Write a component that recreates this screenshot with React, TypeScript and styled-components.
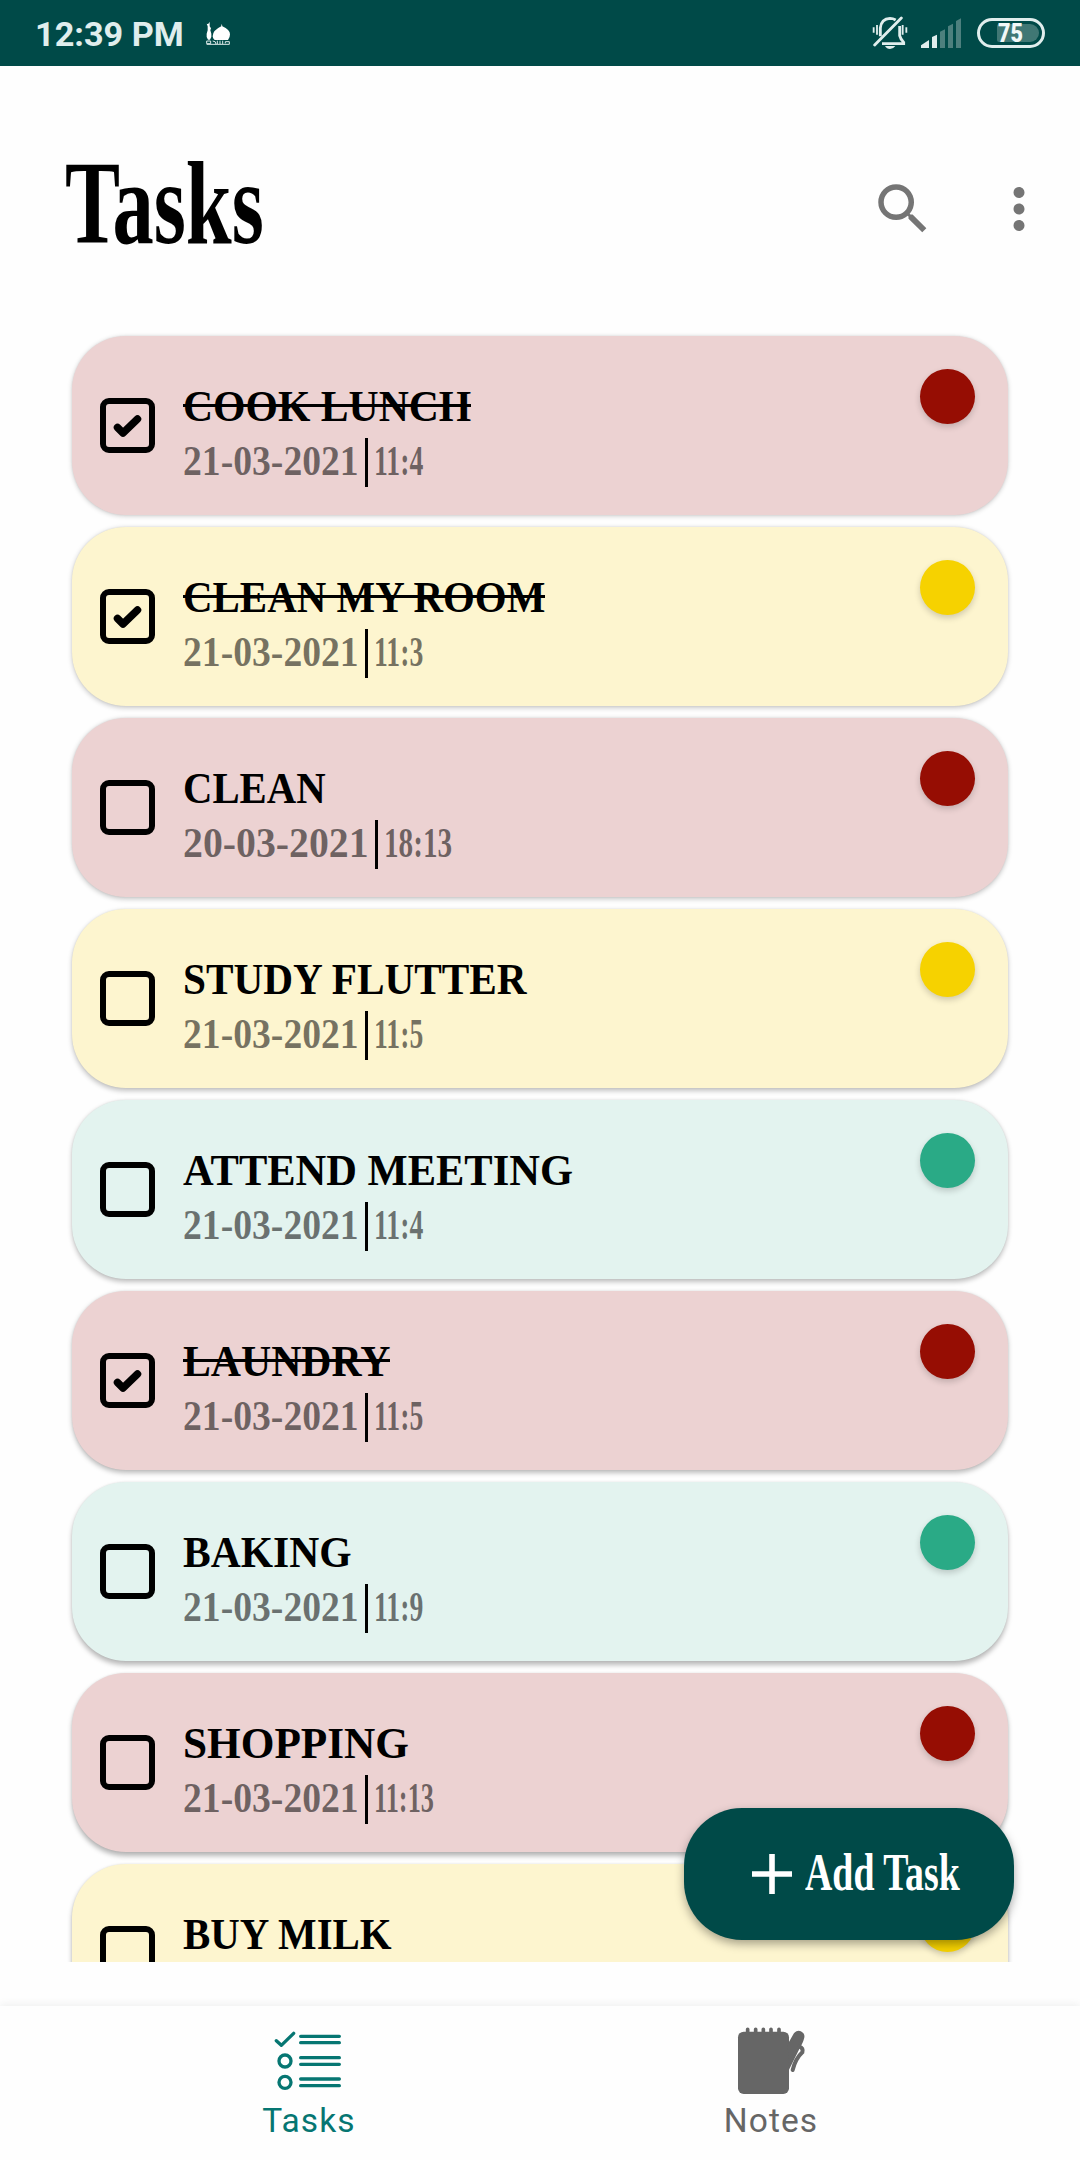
import React, { useLayoutEffect, useRef, useState } from "react";
import styled, { createGlobalStyle } from "styled-components";
import { MdMoreVert, MdSearch } from "react-icons/md";

const GlobalStyle = createGlobalStyle`
  * { box-sizing: border-box; }
  body { margin: 0; background: #fefefe; }
`;

const serif = `"Liberation Serif", serif`;
const sans = `Roboto, sans-serif`;
const brand = "#004a48";
const statusInk = "#e0eeed";

const Screen = styled.div`
  position: relative;
  display: flex;
  flex-direction: column;
  width: 1080px;
  height: 2160px;
  overflow: hidden;
  background: #fefefe;
`;

/* ---------- fitted text ---------- */

const FitBox = styled.span<{ $width: number }>`
  display: block;
  flex: none;
  width: ${(p) => p.$width}px;
  white-space: nowrap;
`;

const FitInner = styled.span`
  display: inline-block;
  transform-origin: 0 50%;
  vertical-align: top;
`;

function Fit({ width, children }: { width: number; children: string }) {
  const ref = useRef<HTMLSpanElement>(null);
  const [scale, setScale] = useState(1);
  useLayoutEffect(() => {
    if (ref.current) setScale(width / ref.current.offsetWidth);
  }, [width, children]);
  return (
    <FitBox $width={width}>
      <FitInner ref={ref} style={{ transform: `scaleX(${scale})` }}>
        {children}
      </FitInner>
    </FitBox>
  );
}

/* ---------- status bar ---------- */

const StatusBar = styled.header`
  flex: none;
  display: flex;
  align-items: center;
  height: 66px;
  padding: 0 35px 0 35px;
  background: ${brand};
  color: ${statusInk};
`;

const Clock = styled.div`
  margin-right: 21px;
  font: 700 34px/40px ${sans};
  padding-top: 2px;
`;

const StatusIcons = styled.div`
  display: flex;
  align-items: center;
  margin-left: auto;
`;

const Battery = styled.div`
  display: flex;
  align-items: center;
  width: 68px;
  height: 30px;
  margin-left: 15px;
  padding-left: 17px;
  border: 3px solid ${statusInk};
  border-radius: 15px;
`;

const BatteryLevel = styled.div`
  width: 42px;
  height: 18px;
  padding-left: 1px;
  border-radius: 2px 9px 9px 2px;
  background: #407774;
  color: #f2f8f7;
  font: 900 25px/19px ${sans};
`;

const MosqueIcon = () => (
  <svg width="26" height="26" viewBox="615 57 78 78" fill="#fff">
    <path d="M638 106q0-18 26-30v-5q0-2 2 0l1 5q23 10 23 24 0 10-6 17h-40q-6-5-6-11z" />
    <path d="M623 82v-6l-3-8q5 4 9-6v14l4 6-2 6 3 10v10l-4 8h-6l-4-8V98l3-10z" />
    <path d="M620 120h12v8h-12zM620 130h68v-8h-12v5M638 120q10 0 10 9M652 119v10M660 119v10M668 119v10" fill="none" stroke="#dceae9" strokeWidth="3" />
  </svg>
);

const BellOffIcon = () => (
  <svg width="36" height="34" viewBox="96 48 108 102" fill="none" stroke={statusInk}>
    <path d="M121 109V84Q124 56 150 55q9 0 17 5M179 78v29q2 9 12 20v4h-65" strokeWidth="8.5" />
    <path d="M104 135L184 54" strokeWidth="8.5" strokeLinecap="round" />
    <path d="M101 82v16M111 75v29M188 75v29M199 82v16" strokeWidth="5.5" />
    <path d="M135 138h31q-6 9-16 9t-15-9z" fill={statusInk} stroke="none" />
  </svg>
);

const SignalIcon = () => (
  <svg width="42" height="32" viewBox="240 48 126 96">
    <path d="M243 141v-8l24-16v24zM276 141v-33l15-7v40z" fill={statusInk} />
    <path d="M300 141V92l15-7v56zM324 141V76l15-8v73zM348 141V60l15-8v89z" fill="#4d807e" />
  </svg>
);

/* ---------- page header ---------- */

const PageHeader = styled.div`
  flex: none;
  display: flex;
  justify-content: space-between;
  height: 260px;
  padding: 72px 28px 0 65px;
`;

const PageTitle = styled.h1`
  margin: 0;
  padding-top: 3px;
  color: #000;
  font: 700 119px/124px ${serif};
`;

const Actions = styled.div`
  display: flex;
  gap: 50px;
  height: 66px;
  margin-top: 38px;
  color: #757575;
`;

/* ---------- task list ---------- */

const TaskList = styled.main`
  flex: none;
  display: flex;
  flex-direction: column;
  gap: 12px;
  height: 1636px;
  padding: 10px 72px 0;
  overflow: hidden;
`;

const Card = styled.article<{ $color: string; $depth: number }>`
  flex: none;
  display: flex;
  height: 179px;
  padding: 0 33px 0 28px;
  border-radius: 54px;
  background: ${(p) => p.$color};
  box-shadow: 0 ${(p) => 1 + p.$depth * 0.35}px 5px rgba(0, 0, 0, ${(p) => 0.2 + p.$depth * 0.012}),
    0 0 2px rgba(0, 0, 0, 0.08);
`;

const CheckBox = styled.div`
  flex: none;
  display: grid;
  place-items: center;
  width: 55px;
  height: 55px;
  margin: 62px 28px 0 0;
  border: 6px solid #000;
  border-radius: 9px;
`;

const Body = styled.div`
  flex: 1;
  padding-top: 46px;
`;

const TaskName = styled.div<{ $done: boolean }>`
  position: relative;
  width: fit-content;
  margin-bottom: 7px;
  color: #000;
  font: 700 45px/49px ${serif};

  &::after {
    content: "";
    display: ${(p) => (p.$done ? "block" : "none")};
    position: absolute;
    left: 0;
    right: 0;
    top: 22px;
    height: 3px;
    background: #000;
  }
`;

const When = styled.div`
  display: flex;
  height: 49px;
  color: rgba(0, 0, 0, 0.54);
  font: 700 43px/45px ${serif};
`;

const Divider = styled.span`
  width: 3px;
  margin: 0 6px;
  background: #000;
`;

const Priority = styled.div<{ $color: string }>`
  flex: none;
  width: 55px;
  height: 55px;
  margin-top: 33px;
  border-radius: 50%;
  background: ${(p) => p.$color};
  box-shadow: 0 3px 6px rgba(0, 0, 0, 0.18);
`;

/* ---------- floating button ---------- */

const AddButton = styled.button`
  position: absolute;
  left: 684px;
  top: 1808px;
  display: flex;
  align-items: center;
  width: 330px;
  height: 132px;
  padding: 0 0 0 68px;
  border: 0;
  border-radius: 58px;
  background: ${brand};
  color: #fff;
  font: 700 53px/54px ${serif};
  box-shadow: 0 4px 10px rgba(0, 0, 0, 0.34);
`;

const AddLabel = styled.span`
  margin: -4px 0 0 13px;
`;

/* ---------- bottom navigation ---------- */

const BottomNav = styled.nav`
  display: flex;
  justify-content: center;
  height: 154px;
  margin-top: auto;
  background: #fefefe;
  box-shadow: 0 -2px 8px rgba(0, 0, 0, 0.06);
`;

const NavItem = styled.div<{ $active?: boolean }>`
  display: flex;
  flex-direction: column;
  align-items: center;
  gap: 6px;
  width: 462px;
  padding-top: 20px;
  color: ${(p) => (p.$active ? "#067672" : "#666")};
  font: 400 33.5px/38px ${sans};
  letter-spacing: 1.1px;
`;

const TasksIcon = () => (
  <svg width="70" height="70" viewBox="102 108 210 210" fill="none" stroke="currentColor" strokeLinecap="round">
    <path d="M109 152l15 14 37-36" strokeWidth="10" strokeLinejoin="round" />
    <g strokeWidth="10">
      <circle cx="135" cy="213" r="18" />
      <circle cx="135" cy="277" r="18" />
      <path d="M182 139h116M182 158h116M182 203h116M182 223h116M182 267h116M182 287h116" />
    </g>
  </svg>
);

const NotesIcon = () => (
  <svg width="70" height="70" viewBox="108 108 210 210" fill="currentColor">
    <rect x="114" y="125" width="153" height="187" rx="17" />
    <path d="M143 118v12M167 118v12M190 118v12M213 118v12M237 118v12" stroke="currentColor" strokeWidth="11" strokeLinecap="round" />
    <path d="M263 163l17-30a17 17 0 0 1 32 13q-3 12-14 31l-31 62z" />
    <path d="M298 170q13 4 9 17-20 18-29 53" fill="none" stroke="currentColor" strokeWidth="12" strokeLinecap="round" />
  </svg>
);

/* ---------- data ---------- */

const tones = {
  high: { card: "#ecd2d2", dot: "#960d03" },
  mid: { card: "#fdf5cf", dot: "#f6d200" },
  low: { card: "#e3f3ef", dot: "#2aaa86" },
};

type Task = {
  name: string;
  width: number;
  tone: keyof typeof tones;
  done?: boolean;
  when?: { date: string; dateWidth: number; time: string; timeWidth: number };
};

const on21 = (time: string, timeWidth = 49) => ({ date: "21-03-2021", dateWidth: 176, time, timeWidth });

const tasks: Task[] = [
  { name: "COOK LUNCH", width: 288, when: on21("11:4"), tone: "high", done: true },
  { name: "CLEAN MY ROOM", width: 362, when: on21("11:3"), tone: "mid", done: true },
  { name: "CLEAN", width: 143, when: { date: "20-03-2021", dateWidth: 186, time: "18:13", timeWidth: 68 }, tone: "high" },
  { name: "STUDY FLUTTER", width: 344, when: on21("11:5"), tone: "mid" },
  { name: "ATTEND MEETING", width: 390, when: on21("11:4"), tone: "low" },
  { name: "LAUNDRY", width: 207, when: on21("11:5"), tone: "high", done: true },
  { name: "BAKING", width: 169, when: on21("11:9"), tone: "low" },
  { name: "SHOPPING", width: 226, when: on21("11:13", 60), tone: "high" },
  { name: "BUY MILK", width: 209, tone: "mid" },
];

export default function App() {
  return (
    <Screen>
      <GlobalStyle />
      <StatusBar>
        <Clock>
          <Fit width={149}>12:39 PM</Fit>
        </Clock>
        <MosqueIcon />
        <StatusIcons>
          <BellOffIcon />
          <svg width="12" height="1" />
          <SignalIcon />
          <Battery>
            <BatteryLevel>
              <Fit width={25}>75</Fit>
            </BatteryLevel>
          </Battery>
        </StatusIcons>
      </StatusBar>

      <PageHeader>
        <PageTitle>
          <Fit width={199}>Tasks</Fit>
        </PageTitle>
        <Actions>
          <MdSearch size={66} />
          <MdMoreVert size={66} />
        </Actions>
      </PageHeader>

      <TaskList>
        {tasks.map((t, i) => (
          <Card key={t.name} $color={tones[t.tone].card} $depth={i}>
            <CheckBox>
              {t.done && (
                <svg width="29" height="24" viewBox="0 0 29 24" fill="none">
                  <path d="M4.5 13.5l5.5 5.5L24.5 5" stroke="#000" strokeWidth="7.5" strokeLinecap="round" strokeLinejoin="round" />
                </svg>
              )}
            </CheckBox>
            <Body>
              <TaskName $done={!!t.done}>
                <Fit width={t.width}>{t.name}</Fit>
              </TaskName>
              {t.when && (
                <When>
                  <Fit width={t.when.dateWidth}>{t.when.date}</Fit>
                  <Divider />
                  <Fit width={t.when.timeWidth}>{t.when.time}</Fit>
                </When>
              )}
            </Body>
            <Priority $color={tones[t.tone].dot} />
          </Card>
        ))}
      </TaskList>

      <AddButton>
        <svg width="40" height="40" viewBox="0 0 40 40">
          <path d="M20 0v40M0 20h40" stroke="#fff" strokeWidth="5.6" />
        </svg>
        <AddLabel>
          <Fit width={155}>Add Task</Fit>
        </AddLabel>
      </AddButton>

      <BottomNav>
        <NavItem $active>
          <TasksIcon />
          Tasks
        </NavItem>
        <NavItem>
          <NotesIcon />
          Notes
        </NavItem>
      </BottomNav>
    </Screen>
  );
}
